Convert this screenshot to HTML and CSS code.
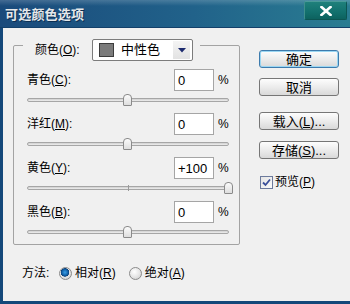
FILE: index.html
```html
<!DOCTYPE html>
<html lang="zh">
<head>
  <meta charset="UTF-8">
  <title>可选颜色选项</title>
  <link rel="stylesheet" href="styles.css">
</head>
<body>
  <div class="window">
    <div class="titlebar">
      <span class="title">可选颜色选项</span>
      <button class="close">
        <svg width="12" height="10" viewBox="0 0 12 10"><path d="M1.5 1 L10.5 9 M10.5 1 L1.5 9" stroke="#fff" stroke-width="2.6" stroke-linecap="square"/></svg>
      </button>
    </div>

    <div class="client">
      <div class="main">
        <div class="group">
          <div class="legend">
            <span class="legend-label">颜色(<u>O</u>):</span>
            <div class="combo">
              <span class="swatch"></span>
              <span class="combo-text">中性色</span>
              <span class="combo-arrow">
                <svg width="8" height="5" viewBox="0 0 8 5"><path d="M0 0 H8 L4 4.5 Z" fill="#1c2a6e"/></svg>
              </span>
            </div>
          </div>

          <div class="adjust">
            <div class="adj-row">
              <span class="adj-label">青色(<u>C</u>):</span>
              <input class="num" type="text" value="0">
              <span class="pct">%</span>
            </div>
            <div class="slider"><span class="track"></span><span class="thumb" style="left: 50%"></span></div>
          </div>

          <div class="adjust">
            <div class="adj-row">
              <span class="adj-label">洋红(<u>M</u>):</span>
              <input class="num" type="text" value="0">
              <span class="pct">%</span>
            </div>
            <div class="slider"><span class="track"></span><span class="thumb" style="left: 50%"></span></div>
          </div>

          <div class="adjust">
            <div class="adj-row">
              <span class="adj-label">黄色(<u>Y</u>):</span>
              <input class="num" type="text" value="+100">
              <span class="pct">%</span>
            </div>
            <div class="slider"><span class="track"></span><span class="tick"></span><span class="thumb" style="left: 100%"></span></div>
          </div>

          <div class="adjust">
            <div class="adj-row">
              <span class="adj-label">黑色(<u>B</u>):</span>
              <input class="num" type="text" value="0">
              <span class="pct">%</span>
            </div>
            <div class="slider"><span class="track"></span><span class="thumb" style="left: 50%"></span></div>
          </div>
        </div>

        <div class="actions">
          <button class="btn default">确定</button>
          <button class="btn btn-cancel">取消</button>
          <button class="btn btn-load">载入(<u>L</u>)...</button>
          <button class="btn btn-save">存储(<u>S</u>)...</button>
          <label class="check">
            <span class="checkbox">
              <svg width="9" height="9" viewBox="0 0 9 9"><path d="M1 4.5 L3.5 7 L8 1.5" fill="none" stroke="#3a4f9a" stroke-width="1.8"/></svg>
            </span>
            预览(<u>P</u>)
          </label>
        </div>
      </div>

      <div class="method">
        <span class="method-label">方法:</span>
        <label class="radio-opt"><span class="radio on"></span>相对(<u>R</u>)</label>
        <label class="radio-opt second"><span class="radio"></span>绝对(<u>A</u>)</label>
      </div>
    </div>
  </div>
</body>
</html>
```

FILE: styles.css
```css
body {
  margin: 0;
  font-family: "Liberation Sans", "Noto Sans CJK SC", sans-serif;
  font-size: 12px;
  color: #000;
  background: #f0f0f0;
}

.window {
  width: 350px;
  height: 304px;
  overflow: hidden;
}

/* title bar */
.titlebar {
  height: 28px;
  display: flex;
  align-items: flex-start;
  justify-content: space-between;
  background:
    linear-gradient(180deg, rgba(255, 255, 255, 0.18) 0, rgba(255, 255, 255, 0) 6px),
    linear-gradient(90deg, #1a4a7b 0%, #21628a 55%, #2a7d92 100%);
  box-sizing: border-box;
  border-bottom: 1px solid #13406a;
}

.title {
  margin: 7px 0 0 5px;
  font-size: 13px;
  line-height: 15px;
  font-weight: bold;
  color: #e6e8ea;
  letter-spacing: 0.2px;
  text-shadow: 1px 1px 0 #0c2f52;
}

.close {
  margin: 1px 3px 0 0;
  width: 43px;
  height: 19px;
  padding: 0;
  border: 1px solid #0c5552;
  border-top-color: #4a9a98;
  border-left-color: #3f8f8c;
  border-radius: 2px;
  background: linear-gradient(180deg, #1f807b 0%, #12706d 60%, #0d625f 100%);
  display: flex;
  align-items: center;
  justify-content: center;
}

/* client area */
.client {
  height: 276px;
  box-sizing: border-box;
  border-left: 3px solid #14487a;
  border-bottom: 3px solid #14487a;
  padding: 17px 0 0 10px;
  background: #f0f0f0;
}

.main {
  display: flex;
  align-items: flex-start;
}

.group {
  width: 227px;
  box-sizing: border-box;
  border: 1px solid #a3a3a3;
  border-radius: 2px;
  padding: 0 10px 0 13px;
  display: flex;
  flex-direction: column;
}

.legend {
  align-self: flex-start;
  display: flex;
  align-items: center;
  height: 22px;
  margin: -7px 0 0 -4px;
  padding: 0 7px 0 12px;
  background: #f0f0f0;
}

.legend-label {
  width: 47px;
  margin-right: 10px;
  line-height: 14px;
}

.combo {
  width: 101px;
  height: 22px;
  box-sizing: border-box;
  border: 1px solid #7c7c7c;
  border-radius: 2px;
  background: #fff;
  display: flex;
  align-items: center;
  padding: 0 2px 0 6px;
}

.swatch {
  width: 15px;
  height: 14px;
  box-sizing: border-box;
  border: 1px solid #3c3c3c;
  background: #7b7b7b;
}

.combo-text {
  margin-left: 7px;
  flex: 1;
  font-size: 13px;
  line-height: 14px;
}

.combo-arrow {
  width: 17px;
  height: 18px;
  background: linear-gradient(180deg, #f4f4f4, #e2e2e2);
  display: flex;
  align-items: center;
  justify-content: center;
}

.adjust {
  margin-top: 8px;
}

.adjust + .adjust {
  margin-top: 0;
}

.adj-row {
  height: 22px;
  display: flex;
  align-items: center;
}

.adj-label {
  flex: 1;
  line-height: 14px;
}

.num {
  width: 40px;
  height: 22px;
  box-sizing: border-box;
  border: 1px solid #a5a5a5;
  background: #fff;
  padding: 1px 0 0 3px;
  font-family: inherit;
  font-size: 13px;
  color: #000;
  outline: none;
}

.pct {
  margin-left: 4px;
  width: 11px;
  font-size: 12px;
}

.slider {
  position: relative;
  height: 12px;
  margin: 3px 0 7px;
}

.adjust:last-child .slider {
  margin-bottom: 6px;
}

.track {
  position: absolute;
  left: 0;
  right: 0;
  top: 4px;
  height: 4px;
  box-sizing: border-box;
  border: 1px solid #a6a6a6;
  border-radius: 2px;
  background: linear-gradient(180deg, #cfcfcf, #eeeeee);
}

.tick {
  position: absolute;
  left: 50%;
  top: 3px;
  width: 1px;
  height: 6px;
  background: #9a9a9a;
}

.thumb {
  position: absolute;
  top: 0;
  width: 9px;
  height: 12px;
  margin-left: -5px;
  box-sizing: border-box;
  border: 1px solid #8a8a8a;
  border-radius: 4px 4px 1px 1px;
  background: linear-gradient(180deg, #fbfbfb, #dedede);
}

/* right buttons */
.actions {
  margin: 5px 0 0 19px;
  display: flex;
  flex-direction: column;
  align-items: flex-start;
}

.btn {
  width: 80px;
  height: 18px;
  box-sizing: border-box;
  padding: 0;
  border: 1px solid #767676;
  border-radius: 3px;
  background: linear-gradient(180deg, #fdfdfd 0%, #ececec 50%, #d9d9d9 100%);
  font-family: inherit;
  font-size: 13px;
  line-height: 15px;
  color: #000;
}

.btn.default {
  border-color: #3d7bad;
  box-shadow: inset 0 0 0 1px #9ad6f2;
}

.btn-cancel {
  margin-top: 10px;
}

.btn-load {
  margin-top: 16px;
}

.btn-save {
  margin-top: 11px;
}

.check {
  margin: 16px 0 0 1px;
  display: flex;
  align-items: center;
  font-size: 12px;
  line-height: 14px;
}

.checkbox {
  width: 13px;
  height: 13px;
  box-sizing: border-box;
  border: 1px solid #6c7a9c;
  background: linear-gradient(135deg, #e4e4e4, #fbfbfb);
  margin-right: 2px;
  display: flex;
  align-items: center;
  justify-content: center;
}

/* method row */
.method {
  margin: 20px 0 0 9px;
  display: flex;
  align-items: center;
  height: 16px;
}

.method-label {
  width: 37px;
  line-height: 14px;
}

.radio-opt {
  display: flex;
  align-items: center;
  line-height: 14px;
}

.radio-opt.second {
  margin-left: 13px;
}

.radio {
  width: 13px;
  height: 13px;
  box-sizing: border-box;
  border-radius: 50%;
  border: 1px solid #8a8a8a;
  background: radial-gradient(circle at 40% 35%, #ffffff 0%, #e4e4e4 55%, #c8c8c8 100%);
  margin-right: 3px;
}

.radio.on {
  background:
    radial-gradient(circle at 45% 40%, #3aa0e8 0, #1261a8 3px, #0a3f78 4px, transparent 4.5px),
    radial-gradient(circle at 40% 35%, #ffffff 0%, #e4e4e4 55%, #c8c8c8 100%);
}
```
